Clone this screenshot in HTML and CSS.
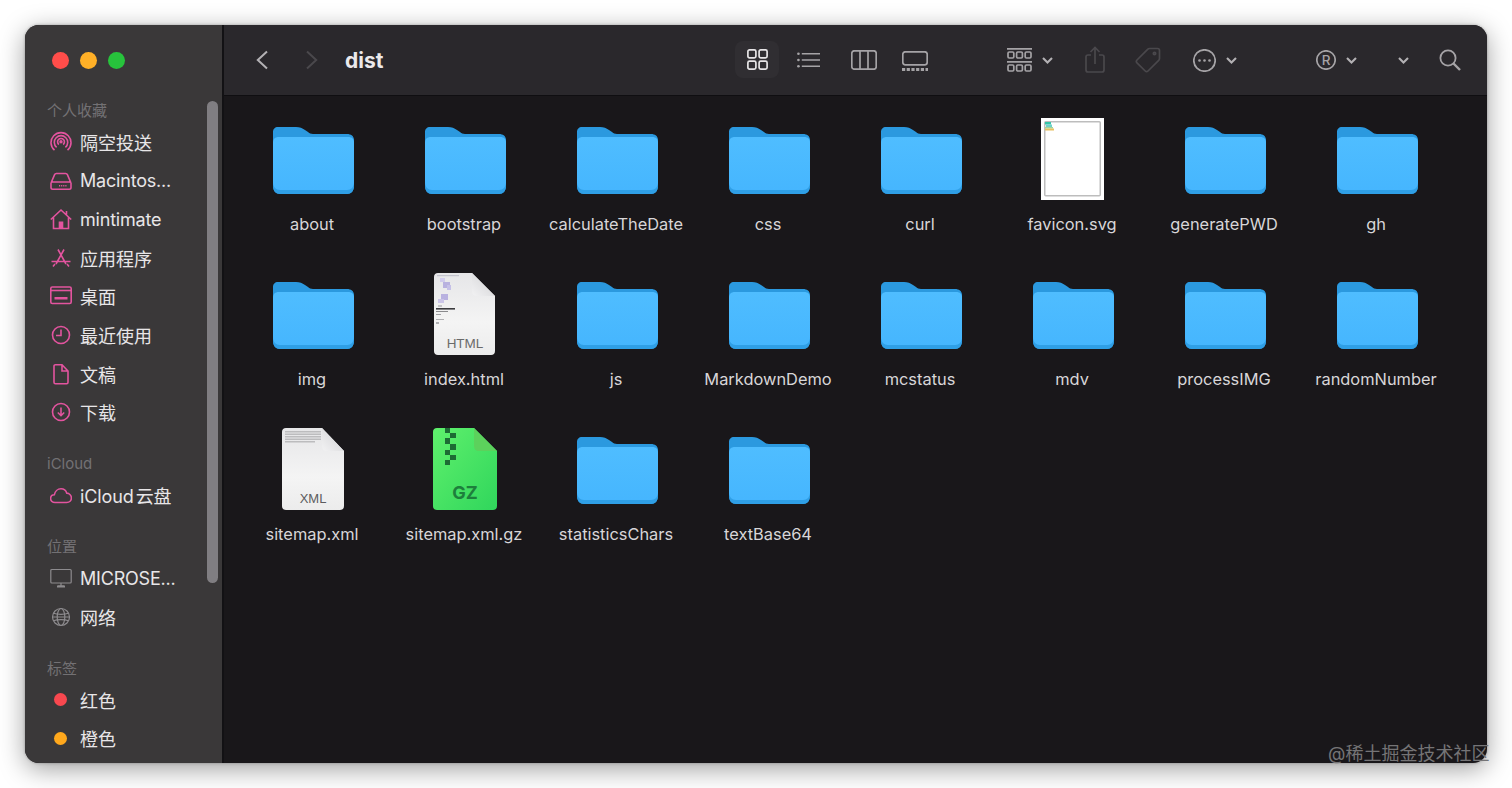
FILE: index.html
```html
<!DOCTYPE html>
<html lang="zh-CN">
<head>
<meta charset="utf-8">
<title>dist</title>
<link rel="stylesheet" href="styles.css">
</head>
<body>
<svg class="defs" width="0" height="0" aria-hidden="true">
  <defs>
    <linearGradient id="fg" x1="0" y1="0" x2="0" y2="1">
      <stop offset="0" stop-color="#4fbdff"/>
      <stop offset="1" stop-color="#46b6fe"/>
    </linearGradient>
    <linearGradient id="gz" x1="0" y1="0" x2="1" y2="1">
      <stop offset="0" stop-color="#5ff06c"/>
      <stop offset="1" stop-color="#30d65c"/>
    </linearGradient>
    <linearGradient id="paper" x1="0" y1="0" x2="0" y2="1">
      <stop offset="0" stop-color="#e6e6e8"/>
      <stop offset=".6" stop-color="#f4f4f4"/>
      <stop offset="1" stop-color="#ececec"/>
    </linearGradient>
    <linearGradient id="curl" x1="0" y1="1" x2="1" y2="0">
      <stop offset="0" stop-color="#f2f2f3"/>
      <stop offset="1" stop-color="#cfcfd2"/>
    </linearGradient>
    <symbol id="folder" viewBox="0 0 90 84">
      <path d="M6 15c0-3 2-5 5-5h18c4 0 6 1 9 3l3 2c1 1 3 2 5 2h34c4 0 7 2 7 6v46c0 5-3 8-7 8H13c-4 0-7-3-7-8z" fill="#2b99df"/>
      <path d="M6 26c0-4 2-6 6-6h69c4 0 6 2 6 6v43c0 5-3 8-7 8H13c-4 0-7-3-7-8z" fill="#2f9fe6"/>
      <path d="M6 26c0-4 2-6 6-6h69c4 0 6 2 6 6v39c0 5-3 8-7 8H13c-4 0-7-3-7-8z" fill="url(#fg)"/>
    </symbol>
  </defs>
</svg>
<main class="window">
  <aside class="sidebar">
    <div class="lights"><span class="light red"></span><span class="light amber"></span><span class="light green"></span></div>
    <section class="group">
      <h2 class="group-title">个人收藏</h2>
      <div class="row">
        <svg class="side-icon" viewBox="0 0 22 22"><path d="M4.500 19.200a10 10 0 1 1 13 0M6.600 16.400a6.700 6.700 0 1 1 8.800 0M8.900 13.500a3.400 3.400 0 1 1 4.200 0"/><circle cx="11" cy="10.800" r=".9"/></svg>
        <span>隔空投送</span>
      </div>
      <div class="row">
        <svg class="side-icon" viewBox="0 0 22 22"><path d="M1 13 4.600 4.600c.3-.7.9-1.100 1.700-1.100h9.400c.8 0 1.400.4 1.700 1.100L21 13M1 13v4.500c0 1 .7 1.700 1.700 1.700h16.600c1 0 1.700-.7 1.700-1.700V13c0-.7-.7-1-1.700-1H2.700C1.700 12 1 12.300 1 13z"/><path d="M9 15.800h8" stroke-dasharray="1.200 .9"/></svg>
        <span class="latin">Macintos...</span>
      </div>
      <div class="row">
        <svg class="side-icon" viewBox="0 0 22 22"><path d="M.8 11.500 11 2l10.200 9.500M3.500 9.500V20.500h15V9.500M16.500 3v3.500"/><rect class="fill" x="8.700" y="13.500" width="4.600" height="7"/></svg>
        <span class="latin">mintimate</span>
      </div>
      <div class="row">
        <svg class="side-icon" viewBox="0 0 22 22"><path d="M8 2.500 16 17M14 2.500 6 17M1.500 14.500h19M3 19.500l2-2.500M19 19.500 17 17"/></svg>
        <span>应用程序</span>
      </div>
      <div class="row">
        <svg class="side-icon" viewBox="0 0 22 22"><rect x=".8" y="2" width="20.400" height="16.500" rx="1.500"/><path d="M1 5.500h20"/><rect class="fill" x="4.500" y="12" width="13" height="2.500"/></svg>
        <span>桌面</span>
      </div>
      <div class="row">
        <svg class="side-icon" viewBox="0 0 22 22"><circle cx="11" cy="11" r="8.500"/><path d="M11 5.500V11.500H6"/></svg>
        <span>最近使用</span>
      </div>
      <div class="row">
        <svg class="side-icon" viewBox="0 0 22 22"><path d="M4 3.200c0-.9.600-1.400 1.400-1.400h6.600L18 8v11.300c0 .9-.6 1.400-1.400 1.400H5.400c-.8 0-1.400-.5-1.400-1.400zM12 2v6h6"/></svg>
        <span>文稿</span>
      </div>
      <div class="row">
        <svg class="side-icon" viewBox="0 0 22 22"><circle cx="11" cy="11" r="8.500"/><path d="M11 6.500v8M7.800 11.500 11 14.700l3.200-3.200"/></svg>
        <span>下载</span>
      </div>
    </section>
    <section class="group">
      <h2 class="group-title">iCloud</h2>
      <div class="row">
        <svg class="side-icon" viewBox="0 0 22 22"><path d="M5 18.500c-2.500 0-4.400-1.800-4.400-3.900 0-2.200 1.700-3.700 3.700-3.800C5 7.500 7.700 4.800 11 4.800c2.900 0 5 1.800 5.700 4.300 2.700.2 4.700 2.400 4.700 4.900 0 2.600-2.100 4.500-4.700 4.500z"/></svg>
        <span class="cloud-name">iCloud 云盘</span>
      </div>
    </section>
    <section class="group">
      <h2 class="group-title">位置</h2>
      <div class="row">
        <svg class="side-icon grey" viewBox="0 0 22 22"><rect x=".8" y="2.500" width="20.400" height="13.500" rx="1"/><path d="M8 19h6M11 16v3"/><path class="thick" d="M7 19.500h8"/></svg>
        <span class="latin">MICROSE...</span>
      </div>
      <div class="row">
        <svg class="side-icon grey" viewBox="0 0 22 22"><circle cx="11" cy="11" r="8.500"/><ellipse cx="11" cy="11" rx="3.800" ry="8.500"/><path d="M3.500 7.200c4 1.500 11 1.500 15 0M3.500 14.800c4-1.500 11-1.500 15 0M2.500 11h17"/></svg>
        <span>网络</span>
      </div>
    </section>
    <section class="group">
      <h2 class="group-title">标签</h2>
      <div class="row"><span class="tag-slot"><span class="tag-dot tag-red"></span></span><span>红色</span></div>
      <div class="row"><span class="tag-slot"><span class="tag-dot tag-orange"></span></span><span>橙色</span></div>
    </section>
    <div class="scrollbar"></div>
  </aside>

  <div class="pane">
    <header class="toolbar">
      <svg class="tb back" viewBox="0 0 12 20"><path d="M11 1.500 1.800 10 11 18.500"/></svg>
      <svg class="tb forward dim" viewBox="0 0 12 20"><path d="M1 1.500 10.200 10 1 18.500"/></svg>
      <h1 class="title">dist</h1>
      <div class="view-on">
        <svg class="tb grid-i" viewBox="0 0 21 21"><rect x=".9" y=".9" width="8" height="8" rx="1.600"/><rect x="12.100" y=".9" width="8" height="8" rx="1.600"/><rect x=".9" y="12.100" width="8" height="8" rx="1.600"/><rect x="12.100" y="12.100" width="8" height="8" rx="1.600"/></svg>
      </div>
      <svg class="tb list-i" viewBox="0 0 24 16"><path d="M5 1.500h19M5 8h19M5 14.500h19"/><circle class="dot" cx="1.500" cy="1.500" r="1.400"/><circle class="dot" cx="1.500" cy="8" r="1.400"/><circle class="dot" cx="1.500" cy="14.500" r="1.400"/></svg>
      <svg class="tb cols-i" viewBox="0 0 26 20"><rect x=".8" y=".8" width="24.400" height="18.400" rx="2.500"/><path d="M9 1v18M17 1v18"/></svg>
      <svg class="tb gal-i" viewBox="0 0 26 20"><rect x=".8" y=".8" width="24.400" height="13" rx="2.500"/><path class="dash" d="M0 18.500h26"/></svg>
      <svg class="tb grp-i" viewBox="0 0 25 24"><path d="M0 .8h25M0 13.800h25"/><rect x="1" y="4" width="5.800" height="6" rx="1.200"/><rect x="9.600" y="4" width="5.800" height="6" rx="1.200"/><rect x="18.200" y="4" width="5.800" height="6" rx="1.200"/><rect x="1" y="17" width="5.800" height="6" rx="1.200"/><rect x="9.600" y="17" width="5.800" height="6" rx="1.200"/><rect x="18.200" y="17" width="5.800" height="6" rx="1.200"/></svg>
      <svg class="tb chev chev-a" viewBox="0 0 11 7"><path d="M1 1l4.500 4.500L10 1"/></svg>
      <svg class="tb share-i dim" viewBox="0 0 20 27"><path d="M6 9H3C1.800 9 1 9.800 1 11v13c0 1.200.8 2 2 2h14c1.200 0 2-.8 2-2V11c0-1.200-.8-2-2-2h-3M10 18V1.500M5.500 6 10 1.500 14.500 6"/></svg>
      <svg class="tb tag-i dim" viewBox="0 0 26 26"><path d="M14.500 1.500h8c1.200 0 2 .8 2 2v8c0 .8-.3 1.400-.8 1.900L13 24c-.8.800-2 .8-2.800 0L2 15.800c-.8-.8-.8-2 0-2.800L12.600 2.300c.5-.5 1.200-.8 1.900-.8z"/><circle cx="19.500" cy="6.500" r="1.200"/></svg>
      <svg class="tb more-i" viewBox="0 0 23 23"><circle cx="11.500" cy="11.500" r="10.700"/><circle class="dot" cx="6.500" cy="11.500" r="1.300"/><circle class="dot" cx="11.500" cy="11.500" r="1.300"/><circle class="dot" cx="16.500" cy="11.500" r="1.300"/></svg>
      <svg class="tb chev chev-b" viewBox="0 0 11 7"><path d="M1 1l4.500 4.500L10 1"/></svg>
      <svg class="tb reg-i" viewBox="0 0 20 20"><circle cx="10" cy="10" r="9.200"/><text class="reg-text" x="10" y="15">R</text></svg>
      <svg class="tb chev chev-c" viewBox="0 0 11 7"><path d="M1 1l4.500 4.500L10 1"/></svg>
      <svg class="tb chev chev-d" viewBox="0 0 11 7"><path d="M1 1l4.500 4.500L10 1"/></svg>
      <svg class="tb search-i" viewBox="0 0 22 22"><circle cx="9" cy="9" r="7.600"/><path class="heavy" d="M14.500 14.500 21 21"/></svg>
    </header>

    <div class="files">
      <figure class="file"><svg class="file-icon" viewBox="0 0 90 84"><use href="#folder"/></svg><figcaption>about</figcaption></figure>
      <figure class="file"><svg class="file-icon" viewBox="0 0 90 84"><use href="#folder"/></svg><figcaption>bootstrap</figcaption></figure>
      <figure class="file"><svg class="file-icon" viewBox="0 0 90 84"><use href="#folder"/></svg><figcaption>calculateTheDate</figcaption></figure>
      <figure class="file"><svg class="file-icon" viewBox="0 0 90 84"><use href="#folder"/></svg><figcaption>css</figcaption></figure>
      <figure class="file"><svg class="file-icon" viewBox="0 0 90 84"><use href="#folder"/></svg><figcaption>curl</figcaption></figure>
      <figure class="file">
        <svg class="file-icon" viewBox="0 0 90 84">
          <rect x="14" y="1" width="63" height="82" fill="#fff"/>
          <rect x="17.750" y="4.750" width="55.500" height="74" rx="1" fill="#fff" stroke="#bdbdbd" stroke-width="1.500"/>
          <rect x="18" y="5" width="6" height="2.500" fill="#35c4a8"/>
          <rect x="19" y="7.500" width="6" height="2.500" fill="#6fd0c8"/>
          <rect x="18" y="10" width="8" height="1.500" fill="#9ed59a"/>
          <rect x="18" y="11.500" width="9" height="2" fill="#e8c060"/>
        </svg>
        <figcaption>favicon.svg</figcaption>
      </figure>
      <figure class="file"><svg class="file-icon" viewBox="0 0 90 84"><use href="#folder"/></svg><figcaption>generatePWD</figcaption></figure>
      <figure class="file"><svg class="file-icon" viewBox="0 0 90 84"><use href="#folder"/></svg><figcaption>gh</figcaption></figure>

      <figure class="file"><svg class="file-icon" viewBox="0 0 90 84"><use href="#folder"/></svg><figcaption>img</figcaption></figure>
      <figure class="file">
        <svg class="file-icon" viewBox="0 0 90 84">
          <path d="M19 1h34l23 23v55c0 2.500-1.500 4-4 4H19c-2.500 0-4-1.500-4-4V5c0-2.500 1.500-4 4-4z" fill="url(#paper)"/>
          <path d="M53 1l23 23H58c-3 0-5-2-5-5z" fill="url(#curl)"/>
          <g opacity=".75">
            <rect x="18" y="3" width="22" height="1.200" fill="#b8b8c4"/>
            <rect x="21" y="6" width="5" height="4" fill="#c8c2ec"/>
            <rect x="24" y="10" width="7" height="6" fill="#a89fdc"/>
            <rect x="28" y="13" width="4" height="5" fill="#b9b2e6"/>
            <rect x="22" y="22" width="7" height="6" fill="#a89fdc"/>
            <rect x="19" y="27" width="6" height="4" fill="#c0b8e6"/>
            <rect x="19" y="33" width="4" height="2" fill="#b5b5b8"/>
          </g>
          <rect x="17" y="36" width="19" height="1.600" fill="#3b3b3e"/>
          <rect x="17" y="39" width="12" height="1" fill="#8a8a8d"/>
          <rect x="17" y="42" width="5" height="1" fill="#a0a0a3"/>
          <rect x="17" y="47" width="8" height="1" fill="#b0b0b3"/>
          <rect x="17" y="50" width="3" height="2" fill="#b0b0b3"/>
          <text class="doc-label" x="46" y="76">HTML</text>
        </svg>
        <figcaption>index.html</figcaption>
      </figure>
      <figure class="file"><svg class="file-icon" viewBox="0 0 90 84"><use href="#folder"/></svg><figcaption>js</figcaption></figure>
      <figure class="file"><svg class="file-icon" viewBox="0 0 90 84"><use href="#folder"/></svg><figcaption>MarkdownDemo</figcaption></figure>
      <figure class="file"><svg class="file-icon" viewBox="0 0 90 84"><use href="#folder"/></svg><figcaption>mcstatus</figcaption></figure>
      <figure class="file"><svg class="file-icon" viewBox="0 0 90 84"><use href="#folder"/></svg><figcaption>mdv</figcaption></figure>
      <figure class="file"><svg class="file-icon" viewBox="0 0 90 84"><use href="#folder"/></svg><figcaption>processIMG</figcaption></figure>
      <figure class="file"><svg class="file-icon" viewBox="0 0 90 84"><use href="#folder"/></svg><figcaption>randomNumber</figcaption></figure>

      <figure class="file">
        <svg class="file-icon" viewBox="0 0 90 84">
          <path d="M19 1h36l22 23v55c0 2.500-1.500 4-4 4H19c-2.500 0-4-1.500-4-4V5c0-2.500 1.500-4 4-4z" fill="url(#paper)"/>
          <path d="M55 1l22 23H60c-3 0-5-2-5-5z" fill="url(#curl)"/>
          <path d="M18 4h36v1.500H18zM18 6.500h36V8H18zM18 9h36v1.500H18zM18 11.500h36V13H18zM18 14h30v1.500H18z" fill="#bcbcbe"/>
          <text class="doc-label xml" x="46" y="76">XML</text>
        </svg>
        <figcaption>sitemap.xml</figcaption>
      </figure>
      <figure class="file">
        <svg class="file-icon" viewBox="0 0 90 84">
          <path d="M18 1h37l23 23v55c0 2.500-1.500 4-4 4H18c-2.500 0-4-1.500-4-4V5c0-2.500 1.500-4 4-4z" fill="url(#gz)"/>
          <path d="M55 1l23 23H60c-3 0-5-2-5-5z" fill="#5cd15c"/>
          <path d="M26 1h5v5h-5zM31 6h6v5h-6zM26 11h5v6h-5zM31 17h6v6h-6zM26 23h5v5h-5zM31 28h6v5h-6zM26 33h5v5h-5z" fill="#1d6b34"/>
          <text class="doc-label gz" x="46" y="72">GZ</text>
        </svg>
        <figcaption>sitemap.xml.gz</figcaption>
      </figure>
      <figure class="file"><svg class="file-icon" viewBox="0 0 90 84"><use href="#folder"/></svg><figcaption>statisticsChars</figcaption></figure>
      <figure class="file"><svg class="file-icon" viewBox="0 0 90 84"><use href="#folder"/></svg><figcaption>textBase64</figcaption></figure>
    </div>
  </div>
</main>
<div class="watermark">@稀土掘金技术社区</div>
</body>
</html>
```
FILE: styles.css
```css
* { box-sizing: border-box; }
html, body { margin: 0; height: 100%; }
body {
  background: #fff;
  padding: 25px;
  overflow: hidden;
  position: relative;
  font-family: Inter, "Noto Sans CJK SC", "Liberation Sans", sans-serif;
}
.defs { position: absolute; }

.window {
  width: 1462px;
  height: 738px;
  display: flex;
  border-radius: 14px;
  overflow: hidden;
  background: #19171a;
  box-shadow: 0 6px 26px rgba(0, 0, 0, .38), 0 0 3px rgba(0, 0, 0, .3);
}

/* Sidebar */
.sidebar {
  position: relative;
  flex: 0 0 199px;
  background: #3a3839;
  border-right: 2px solid #121114;
  overflow: hidden;
}
.lights { display: flex; gap: 11px; padding: 27px 0 0 27px; height: 72px; }
.light { width: 17px; height: 17px; border-radius: 50%; }
.red { background: #ff4d4a; }
.amber { background: #ffb027; }
.green { background: #27c33c; }

.group { margin-bottom: 18.5px; }
.group-title {
  margin: 0;
  padding: 1px 0 0 22px;
  height: 26px;
  line-height: 26px;
  font-size: 15px;
  font-weight: 400;
  color: #737174;
}
.row {
  height: 38.55px;
  display: flex;
  align-items: center;
  gap: 8px;
  padding-left: 25px;
  font-size: 18px;
  color: #e8e6e8;
  white-space: nowrap;
}
.latin { letter-spacing: -.2px; }
.cloud-name { word-spacing: -3px; letter-spacing: -.1px; }
.side-icon {
  width: 22px;
  height: 22px;
  flex: none;
  fill: none;
  stroke: #e3549f;
  stroke-width: 1.6;
}
.side-icon .fill { fill: #e3549f; stroke: none; }
.side-icon.grey { stroke: #8d8b8e; stroke-width: 1.2; }
.side-icon .thick { stroke-width: 2; }
.tag-slot { width: 22px; display: flex; justify-content: center; padding-right: 1px; }
.tag-dot { width: 13px; height: 13px; border-radius: 50%; }
.tag-red { background: #f8484f; }
.tag-orange { background: #ffa81c; }
.scrollbar {
  position: absolute;
  left: 182px;
  top: 76px;
  width: 11px;
  height: 482px;
  border-radius: 6px;
  background: #807e82;
}

/* Toolbar */
.pane { flex: 1; min-width: 0; display: flex; flex-direction: column; }
.toolbar {
  flex: 0 0 71px;
  display: flex;
  align-items: center;
  background: #2a282c;
  border-bottom: 1px solid #0f0e11;
  padding-left: 32px;
}
.tb {
  flex: none;
  fill: none;
  stroke: #a5a3a6;
  stroke-width: 1.700;
}
.tb .dot { fill: #a5a3a6; stroke: none; }
.tb.dim { stroke: #4a484c; }
.back { width: 12px; height: 20px; stroke-width: 2; stroke: #b3b1b4; }
.forward { width: 12px; height: 20px; margin-left: 38px; stroke-width: 2; }
.title {
  margin: 0 0 0 27px;
  width: 390px;
  font-size: 21px;
  font-weight: 700;
  color: #ebe9eb;
  line-height: 1;
}
.view-on {
  width: 44px;
  height: 37px;
  border-radius: 8px;
  background: #302e32;
  display: flex;
  align-items: center;
  justify-content: center;
  margin-top: -1px;
}
.grid-i { width: 21px; height: 21px; stroke: #e6e4e6; }
.list-i { width: 23px; height: 16px; margin-left: 18px; }
.cols-i { width: 26px; height: 20px; margin-left: 31px; }
.gal-i { width: 26px; height: 20px; margin-left: 25px; margin-top: 2px; }
.gal-i .dash { stroke-width: 3; stroke-dasharray: 3.200 1.500; }
.grp-i { width: 25px; height: 24px; margin-left: 79px; }
.chev { width: 11px; height: 7px; stroke-width: 2.100; stroke: #b3b1b4; }
.chev-a { margin-left: 10px; }
.share-i { width: 20px; height: 27px; margin-left: 32px; margin-top: -2px; }
.tag-i { width: 26px; height: 26px; margin-left: 30px; }
.more-i { width: 23px; height: 23px; margin-left: 32px; }
.chev-b { margin-left: 10px; }
.reg-i { width: 20px; height: 20px; margin-left: 79px; }
.reg-text {
  font-size: 13.500px;
  font-weight: 500;
  text-anchor: middle;
  fill: #a5a3a6;
  stroke: none;
}
.chev-c { margin-left: 10px; }
.chev-d { margin-left: 41px; }
.search-i { width: 22px; height: 22px; margin-left: 30px; margin-top: -1px; stroke-width: 1.800; }
.search-i .heavy { stroke-width: 2.400; }

/* Files */
.files {
  flex: 1;
  display: grid;
  grid-template-columns: repeat(8, 152px);
  grid-auto-rows: 155px;
  padding: 21px 0 0 12px;
}
.file {
  margin: 0;
  display: flex;
  flex-direction: column;
  align-items: center;
}
.file-icon { width: 90px; height: 84px; flex: none; }
.file figcaption {
  margin-top: 13px;
  font-size: 16.400px;
  line-height: 20px;
  color: #d8d6d8;
  white-space: nowrap;
}
.doc-label {
  font-family: "Liberation Sans", sans-serif;
  font-size: 13.500px;
  text-anchor: middle;
  fill: #6a6a6a;
}
.doc-label.xml { font-size: 13px; fill: #5c5c5e; }
.doc-label.gz { font-family: Inter, sans-serif; font-size: 18px; font-weight: 700; fill: #1d7f3c; }

.watermark {
  position: absolute;
  left: 1328px;
  top: 742px;
  font-size: 18px;
  line-height: 24px;
  color: #757476;
  white-space: nowrap;
}
```
